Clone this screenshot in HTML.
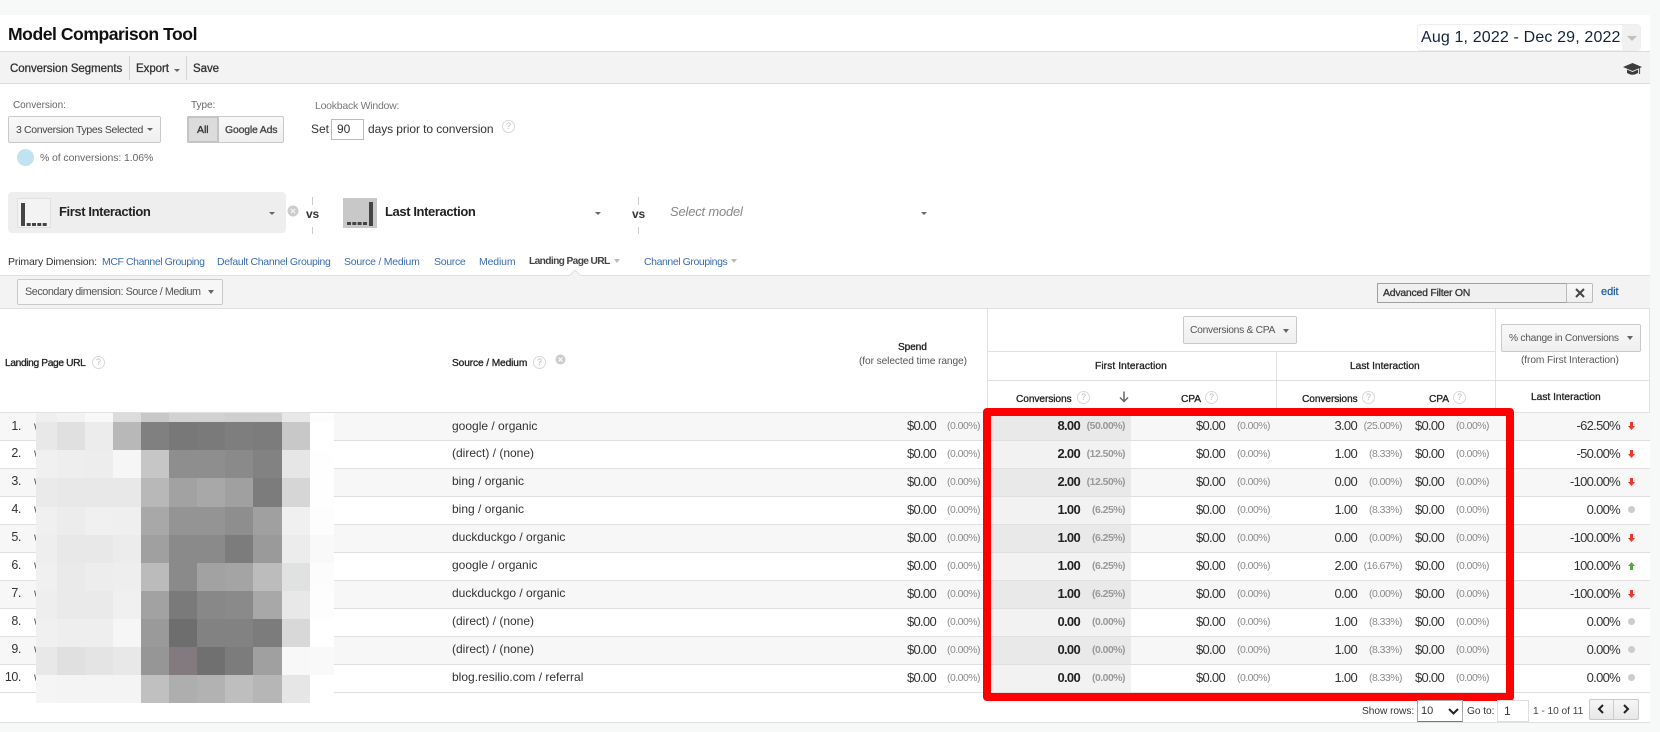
<!DOCTYPE html>
<html><head><meta charset="utf-8"><title>Model Comparison Tool</title>
<style>
html,body{margin:0;padding:0}
body{width:1660px;height:732px;position:relative;overflow:hidden;background:#f7f8f8;font-family:"Liberation Sans",sans-serif;color:#333;font-size:11px}
.a{position:absolute;white-space:nowrap}
.t{position:absolute;white-space:nowrap;line-height:14px;font-size:10.5px;letter-spacing:-.05px}
.l{color:#3a6cb4}
.s{-webkit-text-stroke:.3px}
.btn{position:absolute;box-sizing:border-box;border:1px solid #c9c9c9;border-radius:2px;background:linear-gradient(#f9f9f9,#efefef)}
.car{position:absolute;width:0;height:0;border-left:4px solid transparent;border-right:4px solid transparent;border-top:4px solid #666}
.h{position:absolute;box-sizing:border-box;width:13px;height:13px;border:1px solid #d8d8d8;border-radius:50%;color:#bbb;font-size:9px;line-height:11px;text-align:center;background:#fff}
.ln{position:absolute;background:#e0e0e0}
.r{position:absolute;left:0;width:1650px;height:28px;box-sizing:border-box;border-bottom:1px solid #e0e0e0;background:#fff}
.r.o{background:#f7f7f7}
.r span{position:absolute;top:0;line-height:25px;white-space:nowrap;text-align:right}
.r.f span{line-height:26px}
.r .shade{left:991px;width:140px;height:27px;background:#f2f2f2}
.o .shade{background:#e9e9e9}
.n{right:1629px;font-size:12.5px;letter-spacing:-.4px;color:#333}
.w{left:34px;font-size:12px;color:#555}
.d{left:452px;font-size:12px;color:#333}
.v{font-size:13px;letter-spacing:-.7px;color:#333}
.r .p{top:1px;font-size:10.4px;letter-spacing:-.48px;color:#8a8a8a}
.r .c2{right:670px}
.c1{right:714px}
.c3{right:570px;font-weight:700;color:#222}.r .c4{right:525px;font-weight:700;color:#999}
.c5{right:425px}.r .c6{right:380px}
.c7{right:293px}.r .c8{right:248px}
.c9{right:206px}.r .c10{right:161px}
.c11{right:30px}
.r .dn{left:1628px;top:9px;width:7px;height:8px}
.r .g{left:1628px;top:9px;width:7px;height:7px;border-radius:50%;background:#ccc}
</style></head><body>
<!-- page -->
<div class="a" style="left:0;top:15px;width:1650px;height:707px;background:#fff"></div>
<div class="ln" style="left:0;top:722px;width:1650px;height:1px"></div>

<div class="a" style="left:8px;top:23px;font-size:17.6px;line-height:22px;font-weight:700;color:#111;letter-spacing:-.48px">Model Comparison Tool</div>

<div class="a" style="left:1417px;top:24px;width:224px;height:27px;box-sizing:border-box;border:1px solid #eee;border-radius:4px;background:#fff"></div>
<div class="a" style="left:1622px;top:25px;width:18px;height:25px;background:#f1f1f1"></div>
<div class="a" style="left:1421px;top:28px;font-size:16px;line-height:19px;color:#14223e;letter-spacing:.15px">Aug 1, 2022 - Dec 29, 2022</div>
<div class="car" style="left:1627px;top:36px;border-top-color:#c0c0c0;border-left-width:5px;border-right-width:5px;border-top-width:5px"></div>

<!-- toolbar -->
<div class="a" style="left:0;top:51px;width:1650px;height:33px;box-sizing:border-box;background:#f3f3f3;border-top:1px solid #dcdcdc;border-bottom:1px solid #dcdcdc"></div>
<div class="t s" style="left:10px;top:62px;font-size:11.5px;color:#333">Conversion Segments</div>
<div class="ln" style="left:129px;top:56px;width:1px;height:24px;background:#d5d5d5"></div>
<div class="t s" style="left:136px;top:62px;font-size:11.5px">Export</div>
<div class="car" style="left:174px;top:69px;border-left-width:3px;border-right-width:3px;border-top-width:3px"></div>
<div class="ln" style="left:186px;top:56px;width:1px;height:24px;background:#d5d5d5"></div>
<div class="t s" style="left:193px;top:62px;font-size:11.5px">Save</div>
<svg class="a" style="left:1623px;top:63px" width="19" height="13" viewBox="0 0 19 13"><path d="M9.5 0 L19 4 L9.5 8 L0 4Z" fill="#3c3c3c"/><path d="M4 6.5 L9.5 9 L15 6.5 L15 10 Q9.5 13.5 4 10Z" fill="#3c3c3c"/><path d="M16.5 5 L16.5 11" stroke="#555" stroke-width="1.2"/></svg>

<!-- controls -->
<div class="t" style="left:13px;top:99px;font-size:10px;color:#666">Conversion:</div>
<div class="btn" style="left:8px;top:116px;width:153px;height:27px"></div>
<div class="t" style="left:16px;top:123px;color:#444;font-size:10.5px;letter-spacing:-.35px">3 Conversion Types Selected</div>
<div class="car" style="left:147px;top:128px;border-left-width:3.5px;border-right-width:3.5px;border-top-width:3.5px"></div>
<div class="a" style="left:17px;top:149px;width:17px;height:17px;border-radius:50%;background:#bfe3f1"></div>
<div class="t" style="left:40px;top:151px;color:#666;font-size:10.5px;letter-spacing:-.1px">% of conversions: 1.06%</div>

<div class="t" style="left:191px;top:99px;font-size:10px;color:#666">Type:</div>
<div class="btn" style="left:187px;top:116px;width:97px;height:27px"></div>
<div class="a" style="left:187px;top:116px;width:32px;height:27px;box-sizing:border-box;border:2px solid #c4c4c4;border-radius:2px;background:#dcdcdc"></div>
<div class="t s" style="left:197px;top:123px;font-size:10.5px;color:#333">All</div>
<div class="t s" style="left:225px;top:123px;font-size:10.5px;color:#444;letter-spacing:-.2px">Google Ads</div>

<div class="t" style="left:315px;top:99px;font-size:10.5px;color:#777;letter-spacing:-.25px">Lookback Window:</div>
<div class="t" style="left:311px;top:122px;font-size:12px;color:#333">Set</div>
<div class="a" style="left:331px;top:119px;width:33px;height:21px;box-sizing:border-box;border:1px solid #bbb;background:#fff;font-size:12px;line-height:19px;padding-left:5px">90</div>
<div class="t" style="left:368px;top:122px;font-size:12px;color:#333;letter-spacing:-.08px">days prior to conversion</div>
<div class="h" style="left:502px;top:120px">?</div>

<!-- models -->
<div class="a" style="left:8px;top:192px;width:278px;height:41px;border-radius:4px;background:#eee"></div>
<svg class="a" style="left:17px;top:198px" width="34" height="30"><rect x=".5" y=".5" width="33" height="29" fill="#f3f3f3" stroke="#e0e0e0"/><rect x="4" y="5" width="4" height="23" fill="#444"/><rect x="9.7" y="25" width="4" height="3" fill="#444"/><rect x="15" y="25" width="4" height="3" fill="#444"/><rect x="20.3" y="25" width="4" height="3" fill="#444"/><rect x="25.7" y="25" width="4" height="3" fill="#444"/></svg>
<div class="t" style="left:59px;top:205px;font-size:13px;font-weight:700;color:#222;letter-spacing:-.4px">First Interaction</div>
<div class="car" style="left:269px;top:212px;border-left-width:3.5px;border-right-width:3.5px;border-top-width:3px"></div>
<svg class="a" style="left:287px;top:205px" width="12" height="12"><circle cx="6" cy="6" r="5.5" fill="#ccc"/><path d="M3.8 3.8L8.2 8.2M8.2 3.8L3.8 8.2" stroke="#f2f2f2" stroke-width="1.3"/></svg>
<div class="ln" style="left:312px;top:197px;width:1px;height:8px;background:#ccc"></div>
<div class="ln" style="left:312px;top:227px;width:1px;height:7px;background:#ccc"></div>
<div class="t" style="left:306px;top:207px;font-size:12px;font-weight:700;color:#333;letter-spacing:-.2px">vs</div>
<svg class="a" style="left:343px;top:198px" width="34" height="30"><rect width="34" height="30" fill="#c8c8c8"/><rect x="26" y="4" width="4" height="24" fill="#444"/><rect x="4" y="24" width="4" height="3" fill="#444"/><rect x="9.3" y="24" width="4" height="3" fill="#444"/><rect x="14.6" y="24" width="4" height="3" fill="#444"/><rect x="20" y="24" width="4" height="3" fill="#444"/></svg>
<div class="t" style="left:385px;top:205px;font-size:13px;font-weight:700;color:#222;letter-spacing:-.4px">Last Interaction</div>
<div class="car" style="left:595px;top:212px;border-left-width:3.5px;border-right-width:3.5px;border-top-width:3px"></div>
<div class="ln" style="left:638px;top:197px;width:1px;height:8px;background:#ccc"></div>
<div class="ln" style="left:638px;top:227px;width:1px;height:7px;background:#ccc"></div>
<div class="t" style="left:632px;top:207px;font-size:12px;font-weight:700;color:#333;letter-spacing:-.2px">vs</div>
<div class="t" style="left:670px;top:205px;font-size:13px;font-style:italic;color:#888;letter-spacing:-.2px">Select model</div>
<div class="car" style="left:921px;top:212px;border-left-width:3.5px;border-right-width:3.5px;border-top-width:3px"></div>

<!-- primary dimension -->
<div class="t" style="left:8px;top:255px;color:#333;letter-spacing:-.15px">Primary Dimension:</div>
<div class="t l" style="left:102px;top:255px;letter-spacing:-.42px">MCF Channel Grouping</div>
<div class="t l" style="left:217px;top:255px;letter-spacing:-.33px">Default Channel Grouping</div>
<div class="t l" style="left:344px;top:255px;letter-spacing:-.25px">Source / Medium</div>
<div class="t l" style="left:434px;top:255px;letter-spacing:-.3px">Source</div>
<div class="t l" style="left:479px;top:255px;letter-spacing:-.15px">Medium</div>
<div class="t" style="left:529px;top:255px;font-size:10.2px;font-weight:700;color:#444;letter-spacing:-.62px">Landing Page URL</div>
<div class="car" style="left:614px;top:259px;border-top-color:#bbb;border-left-width:3.5px;border-right-width:3.5px"></div>
<div class="t l" style="left:644px;top:255px;letter-spacing:-.42px">Channel Groupings</div>
<div class="car" style="left:731px;top:259px;border-top-color:#bbb;border-left-width:3.5px;border-right-width:3.5px"></div>

<!-- secondary bar -->
<div class="a" style="left:0;top:275px;width:1650px;height:34px;box-sizing:border-box;background:#f3f3f3;border-top:1px solid #e0e0e0;border-bottom:1px solid #e0e0e0"></div>
<svg class="a" style="left:569px;top:270px" width="12" height="6"><path d="M0 6L6 0L12 6" fill="#f3f3f3" stroke="#e0e0e0"/></svg>
<div class="btn" style="left:17px;top:279px;width:206px;height:26px;background:#f7f7f7"></div>
<div class="t" style="left:25px;top:285px;font-size:10.8px;color:#555;letter-spacing:-.44px">Secondary dimension: Source / Medium</div>
<div class="car" style="left:208px;top:290px;border-left-width:3.5px;border-right-width:3.5px"></div>
<div class="a" style="left:1377px;top:283px;width:190px;height:20px;box-sizing:border-box;border:1px solid #a0a0a0;border-right:0;background:#f0f0f0"></div>
<div class="t s" style="left:1383px;top:286px;font-size:10.5px;color:#333;letter-spacing:-.25px">Advanced Filter ON</div>
<div class="btn" style="left:1566px;top:283px;width:27px;height:20px;border-color:#bbb"></div>
<svg class="a" style="left:1575px;top:288px" width="10" height="10"><path d="M1 1L9 9M9 1L1 9" stroke="#444" stroke-width="2"/></svg>
<div class="t" style="left:1601px;top:285px;font-size:11px;color:#1a5aa0;-webkit-text-stroke:.2px">edit</div>

<!-- header -->
<div class="ln" style="left:987px;top:309px;width:1px;height:103px"></div>
<div class="ln" style="left:1495px;top:309px;width:1px;height:103px"></div>
<div class="ln" style="left:987px;top:351px;width:508px;height:1px"></div>
<div class="ln" style="left:987px;top:380px;width:663px;height:1px"></div>
<div class="ln" style="left:1276px;top:351px;width:1px;height:61px"></div>
<div class="ln" style="left:1649px;top:309px;width:1px;height:103px"></div>
<div class="btn" style="left:1183px;top:316px;width:114px;height:28px"></div>
<div class="t" style="left:1190px;top:324px;font-size:10.3px;color:#555;letter-spacing:-.3px">Conversions &amp; CPA</div>
<div class="car" style="left:1283px;top:329px;border-left-width:3.5px;border-right-width:3.5px"></div>
<div class="btn" style="left:1501px;top:324px;width:140px;height:28px"></div>
<div class="t" style="left:1509px;top:332px;font-size:10.2px;color:#555;letter-spacing:-.25px">% change in Conversions</div>
<div class="car" style="left:1627px;top:336px;border-left-width:3.5px;border-right-width:3.5px"></div>
<div class="t" style="left:1521px;top:354px;font-size:10.2px;color:#555;letter-spacing:-.1px">(from First Interaction)</div>
<div class="t s" style="left:1095px;top:360px;font-size:10.2px;color:#222;letter-spacing:.1px">First Interaction</div>
<div class="t s" style="left:1350px;top:360px;font-size:10.2px;color:#222;letter-spacing:0">Last Interaction</div>
<div class="t s" style="left:1016px;top:393px;font-size:10.2px;color:#222;letter-spacing:-.1px">Conversions</div>
<div class="h" style="left:1077px;top:391px">?</div>
<svg class="a" style="left:1119px;top:391px" width="10" height="12"><path d="M5 .5V10M1 6.5L5 10.5L9 6.5" fill="none" stroke="#666" stroke-width="1.5"/></svg>
<div class="t s" style="left:1181px;top:393px;font-size:10.2px;color:#222;letter-spacing:-.1px">CPA</div>
<div class="h" style="left:1205px;top:391px">?</div>
<div class="t s" style="left:1302px;top:393px;font-size:10.2px;color:#222;letter-spacing:-.1px">Conversions</div>
<div class="h" style="left:1362px;top:391px">?</div>
<div class="t s" style="left:1429px;top:393px;font-size:10.2px;color:#222;letter-spacing:-.1px">CPA</div>
<div class="h" style="left:1453px;top:391px">?</div>
<div class="t s" style="left:1531px;top:391px;font-size:10.2px;color:#222;letter-spacing:0">Last Interaction</div>
<div class="t s" style="left:5px;top:357px;font-size:10.2px;color:#222;letter-spacing:-.35px">Landing Page URL</div>
<div class="h" style="left:92px;top:356px">?</div>
<div class="t s" style="left:452px;top:357px;font-size:10.2px;color:#222;letter-spacing:-.12px">Source / Medium</div>
<div class="h" style="left:533px;top:356px">?</div>
<svg class="a" style="left:555px;top:354px" width="11" height="11"><circle cx="5.5" cy="5.5" r="5" fill="#ccc"/><path d="M3.5 3.5L7.5 7.5M7.5 3.5L3.5 7.5" stroke="#fff" stroke-width="1.1"/></svg>
<div class="t s" style="left:898px;top:341px;font-size:10.2px;color:#222;letter-spacing:-.15px">Spend</div>
<div class="t" style="left:859px;top:355px;font-size:10.2px;color:#555;letter-spacing:-.1px">(for selected time range)</div>
<div class="ln" style="left:0;top:412px;width:1650px;height:1px"></div>

<!-- rows -->
<div class="r o f" style="top:413px"><span class="shade"></span><span class="n">1.</span><span class="w">w</span><span class="d">google / organic</span><span class="v c1">$0.00</span><span class="p c2">(0.00%)</span><span class="v c3">8.00</span><span class="p c4">(50.00%)</span><span class="v c5">$0.00</span><span class="p c6">(0.00%)</span><span class="v c7">3.00</span><span class="p c8">(25.00%)</span><span class="v c9">$0.00</span><span class="p c10">(0.00%)</span><span class="v c11">-62.50%</span><span class="dn"><svg width="7" height="8" style="display:block"><path d="M2 0H5V4H7L3.5 8L0 4H2Z" fill="#f0352a"/></svg></span></div>
<div class="r" style="top:441px"><span class="shade"></span><span class="n">2.</span><span class="w">w</span><span class="d">(direct) / (none)</span><span class="v c1">$0.00</span><span class="p c2">(0.00%)</span><span class="v c3">2.00</span><span class="p c4">(12.50%)</span><span class="v c5">$0.00</span><span class="p c6">(0.00%)</span><span class="v c7">1.00</span><span class="p c8">(8.33%)</span><span class="v c9">$0.00</span><span class="p c10">(0.00%)</span><span class="v c11">-50.00%</span><span class="dn"><svg width="7" height="8" style="display:block"><path d="M2 0H5V4H7L3.5 8L0 4H2Z" fill="#f0352a"/></svg></span></div>
<div class="r o" style="top:469px"><span class="shade"></span><span class="n">3.</span><span class="w">w</span><span class="d">bing / organic</span><span class="v c1">$0.00</span><span class="p c2">(0.00%)</span><span class="v c3">2.00</span><span class="p c4">(12.50%)</span><span class="v c5">$0.00</span><span class="p c6">(0.00%)</span><span class="v c7">0.00</span><span class="p c8">(0.00%)</span><span class="v c9">$0.00</span><span class="p c10">(0.00%)</span><span class="v c11">-100.00%</span><span class="dn"><svg width="7" height="8" style="display:block"><path d="M2 0H5V4H7L3.5 8L0 4H2Z" fill="#f0352a"/></svg></span></div>
<div class="r" style="top:497px"><span class="shade"></span><span class="n">4.</span><span class="w">w</span><span class="d">bing / organic</span><span class="v c1">$0.00</span><span class="p c2">(0.00%)</span><span class="v c3">1.00</span><span class="p c4">(6.25%)</span><span class="v c5">$0.00</span><span class="p c6">(0.00%)</span><span class="v c7">1.00</span><span class="p c8">(8.33%)</span><span class="v c9">$0.00</span><span class="p c10">(0.00%)</span><span class="v c11">0.00%</span><span class="g"></span></div>
<div class="r o" style="top:525px"><span class="shade"></span><span class="n">5.</span><span class="w">w</span><span class="d">duckduckgo / organic</span><span class="v c1">$0.00</span><span class="p c2">(0.00%)</span><span class="v c3">1.00</span><span class="p c4">(6.25%)</span><span class="v c5">$0.00</span><span class="p c6">(0.00%)</span><span class="v c7">0.00</span><span class="p c8">(0.00%)</span><span class="v c9">$0.00</span><span class="p c10">(0.00%)</span><span class="v c11">-100.00%</span><span class="dn"><svg width="7" height="8" style="display:block"><path d="M2 0H5V4H7L3.5 8L0 4H2Z" fill="#f0352a"/></svg></span></div>
<div class="r" style="top:553px"><span class="shade"></span><span class="n">6.</span><span class="w">w</span><span class="d">google / organic</span><span class="v c1">$0.00</span><span class="p c2">(0.00%)</span><span class="v c3">1.00</span><span class="p c4">(6.25%)</span><span class="v c5">$0.00</span><span class="p c6">(0.00%)</span><span class="v c7">2.00</span><span class="p c8">(16.67%)</span><span class="v c9">$0.00</span><span class="p c10">(0.00%)</span><span class="v c11">100.00%</span><span class="dn"><svg width="7" height="8" style="display:block"><path d="M3.5 0L7 4H5V8H2V4H0Z" fill="#5aa83a"/></svg></span></div>
<div class="r o" style="top:581px"><span class="shade"></span><span class="n">7.</span><span class="w">w</span><span class="d">duckduckgo / organic</span><span class="v c1">$0.00</span><span class="p c2">(0.00%)</span><span class="v c3">1.00</span><span class="p c4">(6.25%)</span><span class="v c5">$0.00</span><span class="p c6">(0.00%)</span><span class="v c7">0.00</span><span class="p c8">(0.00%)</span><span class="v c9">$0.00</span><span class="p c10">(0.00%)</span><span class="v c11">-100.00%</span><span class="dn"><svg width="7" height="8" style="display:block"><path d="M2 0H5V4H7L3.5 8L0 4H2Z" fill="#f0352a"/></svg></span></div>
<div class="r" style="top:609px"><span class="shade"></span><span class="n">8.</span><span class="w">w</span><span class="d">(direct) / (none)</span><span class="v c1">$0.00</span><span class="p c2">(0.00%)</span><span class="v c3">0.00</span><span class="p c4">(0.00%)</span><span class="v c5">$0.00</span><span class="p c6">(0.00%)</span><span class="v c7">1.00</span><span class="p c8">(8.33%)</span><span class="v c9">$0.00</span><span class="p c10">(0.00%)</span><span class="v c11">0.00%</span><span class="g"></span></div>
<div class="r o" style="top:637px"><span class="shade"></span><span class="n">9.</span><span class="w">w</span><span class="d">(direct) / (none)</span><span class="v c1">$0.00</span><span class="p c2">(0.00%)</span><span class="v c3">0.00</span><span class="p c4">(0.00%)</span><span class="v c5">$0.00</span><span class="p c6">(0.00%)</span><span class="v c7">1.00</span><span class="p c8">(8.33%)</span><span class="v c9">$0.00</span><span class="p c10">(0.00%)</span><span class="v c11">0.00%</span><span class="g"></span></div>
<div class="r" style="top:665px"><span class="shade"></span><span class="n">10.</span><span class="w">w</span><span class="d">blog.resilio.com / referral</span><span class="v c1">$0.00</span><span class="p c2">(0.00%)</span><span class="v c3">0.00</span><span class="p c4">(0.00%)</span><span class="v c5">$0.00</span><span class="p c6">(0.00%)</span><span class="v c7">1.00</span><span class="p c8">(8.33%)</span><span class="v c9">$0.00</span><span class="p c10">(0.00%)</span><span class="v c11">0.00%</span><span class="g"></span></div>

<!-- pixelated blur -->
<svg class="a" style="left:36px;top:413px" width="298" height="290" shape-rendering="crispEdges">
<g transform="translate(-36,-413)">
<g><rect x="36" y="413" width="21" height="9" fill="#efefef"/><rect x="57" y="413" width="28" height="9" fill="#f2f2f2"/><rect x="85" y="413" width="28" height="9" fill="#f8f8f8"/><rect x="113" y="413" width="28" height="9" fill="#dcdcdc"/><rect x="141" y="413" width="28" height="9" fill="#c8c8c8"/><rect x="169" y="413" width="28" height="9" fill="#d2d2d2"/><rect x="197" y="413" width="28" height="9" fill="#d2d2d2"/><rect x="225" y="413" width="28" height="9" fill="#cfcfcf"/><rect x="253" y="413" width="29" height="9" fill="#cfcfcf"/><rect x="282" y="413" width="28" height="9" fill="#e8e8e8"/><rect x="310" y="413" width="24" height="9" fill="#fdfdfd"/></g>
<g><rect x="36" y="422" width="21" height="28" fill="#e8e8e8"/><rect x="57" y="422" width="28" height="28" fill="#e0e0e0"/><rect x="85" y="422" width="28" height="28" fill="#ececec"/><rect x="113" y="422" width="28" height="28" fill="#b8b8b8"/><rect x="141" y="422" width="28" height="28" fill="#808080"/><rect x="169" y="422" width="28" height="28" fill="#787878"/><rect x="197" y="422" width="28" height="28" fill="#7a7a7a"/><rect x="225" y="422" width="28" height="28" fill="#7e7e7e"/><rect x="253" y="422" width="29" height="28" fill="#7c7c7c"/><rect x="282" y="422" width="28" height="28" fill="#c8c8c8"/><rect x="310" y="422" width="24" height="28" fill="#fff"/></g>
<g><rect x="36" y="450" width="21" height="28" fill="#f0f0f0"/><rect x="57" y="450" width="28" height="28" fill="#eee"/><rect x="85" y="450" width="28" height="28" fill="#ededed"/><rect x="113" y="450" width="28" height="28" fill="#f6f6f6"/><rect x="141" y="450" width="28" height="28" fill="#c6c6c6"/><rect x="169" y="450" width="28" height="28" fill="#8e8e8e"/><rect x="197" y="450" width="28" height="28" fill="#8e8e8e"/><rect x="225" y="450" width="28" height="28" fill="#8a8a8a"/><rect x="253" y="450" width="29" height="28" fill="#828282"/><rect x="282" y="450" width="28" height="28" fill="#e6e6e6"/><rect x="310" y="450" width="24" height="28" fill="#fefefe"/></g>
<g><rect x="36" y="478" width="21" height="29" fill="#eaeaea"/><rect x="57" y="478" width="28" height="29" fill="#e8e8e8"/><rect x="85" y="478" width="28" height="29" fill="#e8e8e8"/><rect x="113" y="478" width="28" height="29" fill="#e8e8e8"/><rect x="141" y="478" width="28" height="29" fill="#b8b8b8"/><rect x="169" y="478" width="28" height="29" fill="#a2a2a2"/><rect x="197" y="478" width="28" height="29" fill="#a8a8a8"/><rect x="225" y="478" width="28" height="29" fill="#a0a0a0"/><rect x="253" y="478" width="29" height="29" fill="#7c7c7c"/><rect x="282" y="478" width="28" height="29" fill="#d6d6d6"/><rect x="310" y="478" width="24" height="29" fill="#fefefe"/></g>
<g><rect x="36" y="507" width="21" height="28" fill="#f0f0f0"/><rect x="57" y="507" width="28" height="28" fill="#ececec"/><rect x="85" y="507" width="28" height="28" fill="#f0f0f0"/><rect x="113" y="507" width="28" height="28" fill="#efefef"/><rect x="141" y="507" width="28" height="28" fill="#a8a8a8"/><rect x="169" y="507" width="28" height="28" fill="#949494"/><rect x="197" y="507" width="28" height="28" fill="#949494"/><rect x="225" y="507" width="28" height="28" fill="#8e8e8e"/><rect x="253" y="507" width="29" height="28" fill="#a0a0a0"/><rect x="282" y="507" width="28" height="28" fill="#f0f0f0"/><rect x="310" y="507" width="24" height="28" fill="#fdfdfd"/></g>
<g><rect x="36" y="535" width="21" height="28" fill="#eee"/><rect x="57" y="535" width="28" height="28" fill="#e8e8e8"/><rect x="85" y="535" width="28" height="28" fill="#e8e8e8"/><rect x="113" y="535" width="28" height="28" fill="#ececec"/><rect x="141" y="535" width="28" height="28" fill="#a0a0a0"/><rect x="169" y="535" width="28" height="28" fill="#8a8a8a"/><rect x="197" y="535" width="28" height="28" fill="#8a8a8a"/><rect x="225" y="535" width="28" height="28" fill="#7c7c7c"/><rect x="253" y="535" width="29" height="28" fill="#9a9a9a"/><rect x="282" y="535" width="28" height="28" fill="#ececec"/><rect x="310" y="535" width="24" height="28" fill="#f9f9f9"/></g>
<g><rect x="36" y="563" width="21" height="28" fill="#f0f0f0"/><rect x="57" y="563" width="28" height="28" fill="#eaeaea"/><rect x="85" y="563" width="28" height="28" fill="#ededed"/><rect x="113" y="563" width="28" height="28" fill="#eee"/><rect x="141" y="563" width="28" height="28" fill="#bbb"/><rect x="169" y="563" width="28" height="28" fill="#8a8a8a"/><rect x="197" y="563" width="28" height="28" fill="#a2a2a2"/><rect x="225" y="563" width="28" height="28" fill="#a4a4a4"/><rect x="253" y="563" width="29" height="28" fill="#bcbcbc"/><rect x="282" y="563" width="28" height="28" fill="#e0e2e2"/><rect x="310" y="563" width="24" height="28" fill="#fcfcfc"/></g>
<g><rect x="36" y="591" width="21" height="28" fill="#eee"/><rect x="57" y="591" width="28" height="28" fill="#eaeaea"/><rect x="85" y="591" width="28" height="28" fill="#eaeaea"/><rect x="113" y="591" width="28" height="28" fill="#f0f0f0"/><rect x="141" y="591" width="28" height="28" fill="#a2a2a2"/><rect x="169" y="591" width="28" height="28" fill="#7a7a7a"/><rect x="197" y="591" width="28" height="28" fill="#888"/><rect x="225" y="591" width="28" height="28" fill="#8a8a8a"/><rect x="253" y="591" width="29" height="28" fill="#a8a8a8"/><rect x="282" y="591" width="28" height="28" fill="#e8e8e8"/><rect x="310" y="591" width="24" height="28" fill="#fdfdfd"/></g>
<g><rect x="36" y="619" width="21" height="28" fill="#f0f0f0"/><rect x="57" y="619" width="28" height="28" fill="#eee"/><rect x="85" y="619" width="28" height="28" fill="#eee"/><rect x="113" y="619" width="28" height="28" fill="#f6f6f6"/><rect x="141" y="619" width="28" height="28" fill="#9a9a9a"/><rect x="169" y="619" width="28" height="28" fill="#6e6e6e"/><rect x="197" y="619" width="28" height="28" fill="#828282"/><rect x="225" y="619" width="28" height="28" fill="#828282"/><rect x="253" y="619" width="29" height="28" fill="#7c7c7c"/><rect x="282" y="619" width="28" height="28" fill="#d8d8d8"/><rect x="310" y="619" width="24" height="28" fill="#fff"/></g>
<g><rect x="36" y="647" width="21" height="28" fill="#e8e8e8"/><rect x="57" y="647" width="28" height="28" fill="#e0e0e0"/><rect x="85" y="647" width="28" height="28" fill="#e4e4e4"/><rect x="113" y="647" width="28" height="28" fill="#e8e8e8"/><rect x="141" y="647" width="28" height="28" fill="#969696"/><rect x="169" y="647" width="28" height="28" fill="#827a7e"/><rect x="197" y="647" width="28" height="28" fill="#707070"/><rect x="225" y="647" width="28" height="28" fill="#7c7c7c"/><rect x="253" y="647" width="29" height="28" fill="#a0a0a0"/><rect x="282" y="647" width="28" height="28" fill="#f8f8f8"/><rect x="310" y="647" width="24" height="28" fill="#f9f9f9"/></g>
<g><rect x="36" y="675" width="21" height="28" fill="#f5f5f5"/><rect x="57" y="675" width="28" height="28" fill="#f4f4f4"/><rect x="85" y="675" width="28" height="28" fill="#f4f4f4"/><rect x="113" y="675" width="28" height="28" fill="#f4f4f4"/><rect x="141" y="675" width="28" height="28" fill="#c0c0c0"/><rect x="169" y="675" width="28" height="28" fill="#aeaeae"/><rect x="197" y="675" width="28" height="28" fill="#b2b2b2"/><rect x="225" y="675" width="28" height="28" fill="#bebebe"/><rect x="253" y="675" width="29" height="28" fill="#b6b6b6"/><rect x="282" y="675" width="28" height="28" fill="#e6e6e6"/><rect x="310" y="675" width="24" height="28" fill="#fff"/></g>
</g></svg>

<!-- red annotation -->
<div class="a" style="left:983px;top:408px;width:531px;height:293px;box-sizing:border-box;border:8px solid #fe0000;border-radius:4px"></div>

<!-- footer -->
<div class="t" style="left:1362px;top:705px;font-size:10.2px;color:#333">Show rows:</div>
<div class="a" style="left:1417px;top:700px;width:46px;height:22px;box-sizing:border-box;border:1px solid #aaa;border-bottom-color:#777;background:#fff;font-size:11px;line-height:21px;padding-left:3px">10</div>
<svg class="a" style="left:1448px;top:708px" width="11" height="7"><path d="M1 1L5.5 5.5L10 1" fill="none" stroke="#222" stroke-width="2"/></svg>
<div class="t" style="left:1467px;top:705px;font-size:10.2px;color:#333">Go to:</div>
<div class="a" style="left:1497px;top:700px;width:32px;height:22px;box-sizing:border-box;border:1px solid #ddd;background:#fff;font-size:12px;line-height:21px;padding-left:6px">1</div>
<div class="t" style="left:1533px;top:705px;font-size:10.2px;color:#444">1 - 10 of 11</div>
<div class="btn" style="left:1589px;top:699px;width:50px;height:21px;background:linear-gradient(#f6f6f6,#e8e8e8)"></div>
<div class="ln" style="left:1613px;top:700px;width:1px;height:19px;background:#ccc"></div>
<svg class="a" style="left:1597px;top:704px" width="8" height="10"><path d="M6 1L2 5L6 9" fill="none" stroke="#222" stroke-width="2"/></svg>
<svg class="a" style="left:1622px;top:704px" width="8" height="10"><path d="M2 1L6 5L2 9" fill="none" stroke="#222" stroke-width="2"/></svg>
</body></html>
